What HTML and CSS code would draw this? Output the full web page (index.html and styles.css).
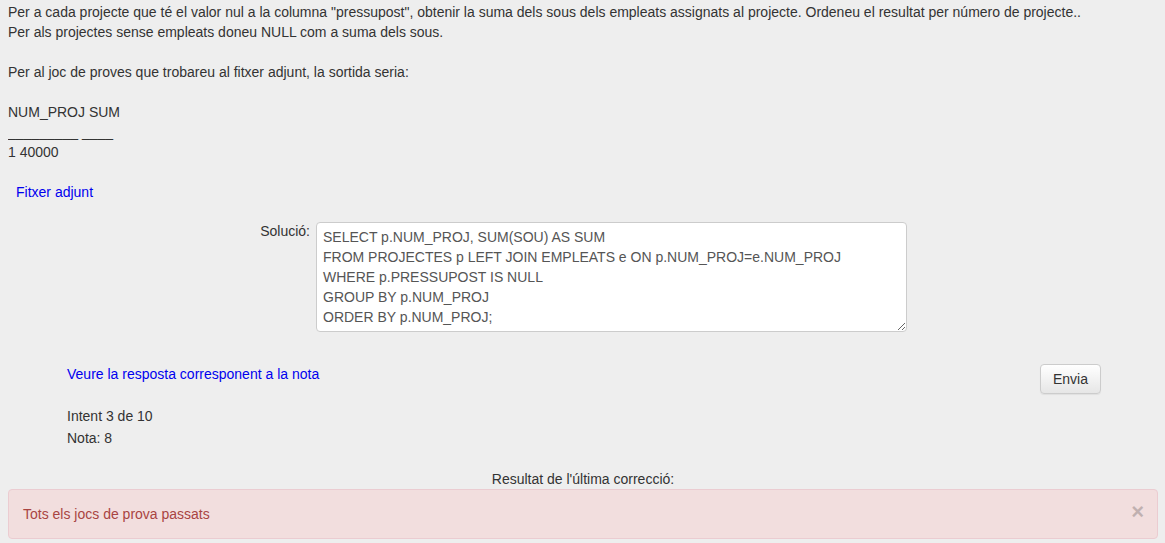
FILE: index.html
```html
<!DOCTYPE html>
<html lang="ca">
<head>
<meta charset="utf-8">
<title>Exercici</title>
<link rel="stylesheet" href="styles.css">
</head>
<body>
<div class="statement">
Per a cada projecte que té el valor nul a la columna "pressupost", obtenir la suma dels sous dels empleats assignats al projecte. Ordeneu el resultat per número de projecte..<br>
Per als projectes sense empleats doneu NULL com a suma dels sous.<br>
<br>
Per al joc de proves que trobareu al fitxer adjunt, la sortida seria:<br>
<br>
NUM_PROJ SUM<br>
_________ ____<br>
1 40000
</div>
<div class="attach"><a class="link" href="#">Fitxer adjunt</a></div>
<form class="answer">
  <div class="field">
    <label class="field-label" for="sol">Solució:</label>
    <textarea id="sol" class="code">SELECT p.NUM_PROJ, SUM(SOU) AS SUM
FROM PROJECTES p LEFT JOIN EMPLEATS e ON p.NUM_PROJ=e.NUM_PROJ
WHERE p.PRESSUPOST IS NULL
GROUP BY p.NUM_PROJ
ORDER BY p.NUM_PROJ;</textarea>
  </div>
  <div class="actions">
    <a class="link" href="#">Veure la resposta corresponent a la nota</a>
    <button type="button" class="btn">Envia</button>
  </div>
  <div class="stats">
    <div class="stat">Intent 3 de 10</div>
    <div class="stat">Nota: 8</div>
  </div>
</form>
<div class="result-title">Resultat de l'última correcció:</div>
<div class="alert">
  <span class="close">×</span>
  Tots els jocs de prova passats
</div>
</body>
</html>
```
FILE: styles.css
```css
html, body {
  background: #eeeeee;
}
body {
  margin: 0 7px 0 8px;
  padding-top: 2px;
  font-family: "Liberation Sans", Arial, sans-serif;
  font-size: 14px;
  line-height: 20px;
  color: #333333;
}
.link {
  color: #0000ee;
  text-decoration: none;
}
.attach {
  margin-top: 20px;
  padding-left: 8px;
}
.answer {
  margin: 0;
}
.field {
  display: flex;
  align-items: flex-start;
  margin-top: 20px;
}
.field-label {
  width: 302px;
  text-align: right;
  margin-right: 6px;
  margin-top: -1px;
}
.code {
  box-sizing: border-box;
  width: 591px;
  height: 110px;
  margin: 0;
  padding: 4px 6px;
  border: 1px solid #cccccc;
  border-radius: 4px;
  background: #ffffff;
  color: #555555;
  font-family: "Liberation Sans", Arial, sans-serif;
  font-size: 14px;
  line-height: 20px;
  white-space: pre;
  overflow: hidden;
}
.actions {
  display: flex;
  justify-content: space-between;
  align-items: flex-start;
  margin-top: 32px;
  padding: 0 57px 0 59px;
}
.btn {
  box-sizing: border-box;
  height: 30px;
  padding: 0 12px;
  border: 1px solid #cccccc;
  border-radius: 4px;
  background: linear-gradient(to bottom, #ffffff 0%, #e6e6e6 100%);
  box-shadow: 0 1px 1px rgba(0,0,0,0.06);
  color: #333333;
  font-family: "Liberation Sans", Arial, sans-serif;
  font-size: 14px;
  line-height: 20px;
}
.stats {
  margin-top: 11px;
  padding-left: 59px;
}
.stat {
  line-height: 22px;
}
.result-title {
  margin-top: 20px;
  text-align: center;
}
.alert {
  padding: 14px;
  border: 1px solid #ebccd1;
  border-radius: 4px;
  background: #f2dede;
  color: #a94442;
}
.close {
  float: right;
  margin-right: -1px;
  margin-top: -2px;
  font-size: 22px;
  font-weight: bold;
  line-height: 20px;
  color: #000000;
  opacity: 0.2;
}
```
